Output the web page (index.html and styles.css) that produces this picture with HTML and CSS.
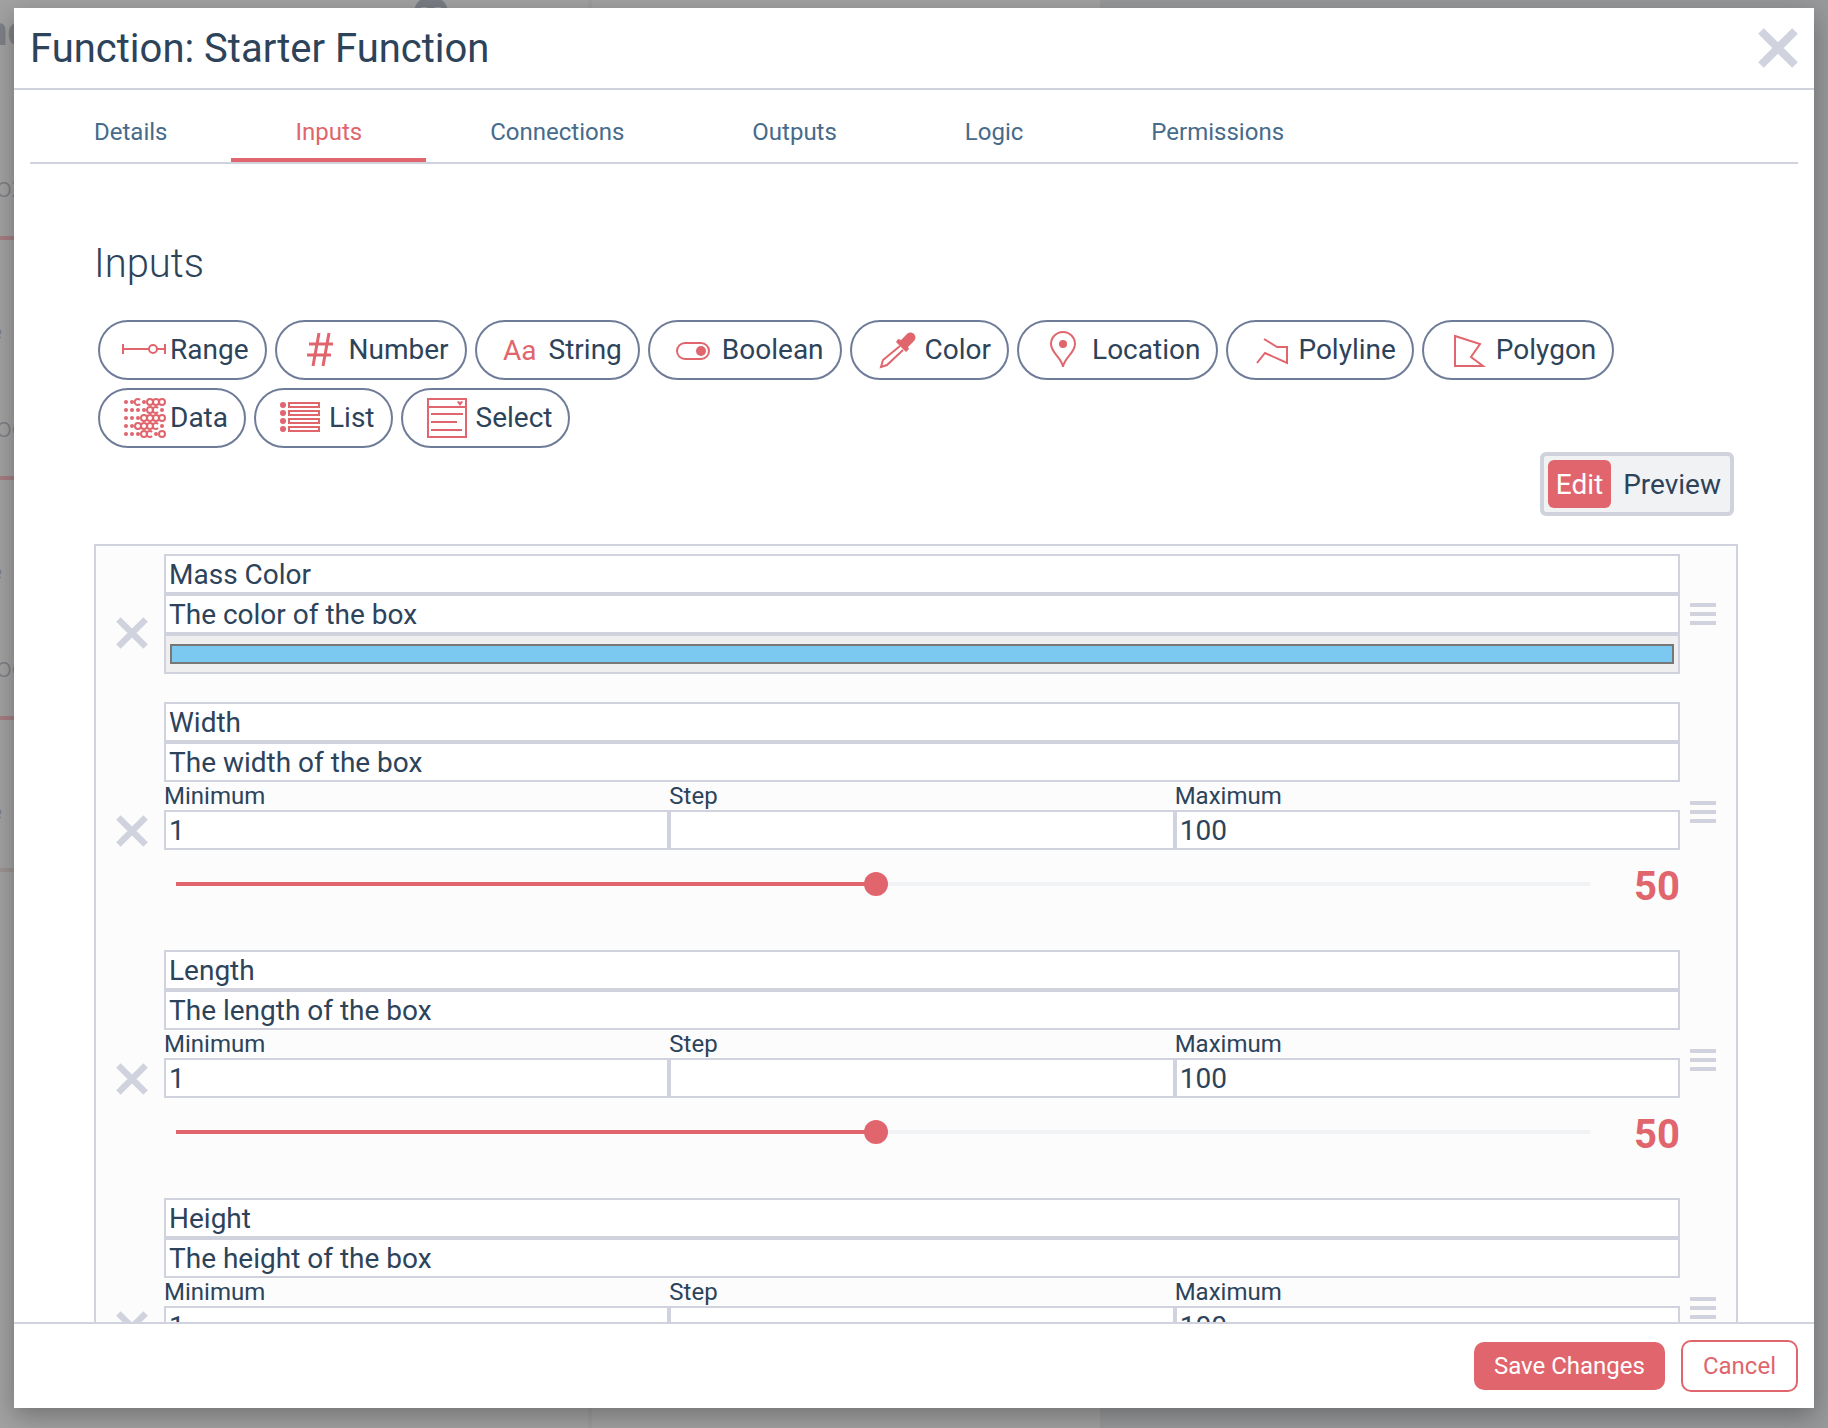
FILE: index.html
```html
<!DOCTYPE html>
<html lang="en">
<head>
<meta charset="utf-8">
<title>Function: Starter Function</title>
<link rel="stylesheet" href="styles.css">
</head>
<body>
<svg class="sprite" aria-hidden="true">
  <symbol id="cross" viewBox="0 0 40 40"><path d="M3 3L37 37M37 3L3 37" stroke="currentColor" stroke-width="8" fill="none"/></symbol>
  <symbol id="grip" viewBox="0 0 26 24"><path d="M0 3h26M0 12h26M0 21h26" stroke="currentColor" stroke-width="4"/></symbol>
</svg>

<div class="backdrop" aria-hidden="true">
  <div class="backdrop-side">
    <div class="backdrop-title">nd<span class="backdrop-badge">88</span></div>
    <div class="backdrop-item">ox</div>
    <div class="backdrop-item"><b>e</b>oo</div>
    <div class="backdrop-item"><b>e</b>oo</div>
    <div class="backdrop-item backdrop-item-last"><b>e</b></div>
  </div>
  <div class="backdrop-main"></div>
  <div class="backdrop-view"></div>
</div>

<div class="shade">
<section class="modal" role="dialog" aria-labelledby="modal-title">
  <header class="modal-header">
    <h1 id="modal-title">Function: Starter Function</h1>
    <button class="close" type="button" aria-label="Close"><svg><use href="#cross"/></svg></button>
  </header>

  <div class="modal-body">
    <nav class="tabs">
      <a href="#details">Details</a>
      <a href="#inputs" class="active">Inputs</a>
      <a href="#connections">Connections</a>
      <a href="#outputs">Outputs</a>
      <a href="#logic">Logic</a>
      <a href="#permissions">Permissions</a>
    </nav>

    <main class="content">
      <h2>Inputs</h2>

      <div class="types">
        <button type="button" class="narrow"><svg viewBox="0 0 54 48"><path d="M7 18v10M49 18v10M7 23h26M41 23h8"/><circle cx="37" cy="23" r="4"/></svg>Range</button>
        <button type="button"><svg viewBox="0 0 54 48"><path stroke-width="3" d="M26 7L20 40M36 7L30 40M16 18h24M14 29h24"/></svg>Number</button>
        <button type="button"><svg viewBox="0 0 54 48"><text x="10" y="34">Aa</text></svg>String</button>
        <button type="button"><svg viewBox="0 0 54 48"><rect x="11" y="17" width="32" height="16" rx="8"/><circle class="solid" cx="35" cy="25" r="5"/></svg>Boolean</button>
        <button type="button" class="wide"><svg viewBox="0 0 54 48"><path d="M32 20L15 34L13 41L19 39L35 24"/><path class="solid" d="M46 8c2 2 2 5 0 7l-6 6 1 2-3 3-10-10 2-3 3 1 6-6c2-2 5-2 7 0z"/></svg>Color</button>
        <button type="button" class="wide"><svg viewBox="0 0 54 48"><path d="M28 41C27 32 16 27 16 18a12 12 0 0 1 24 0C40 27 29 32 28 41z"/><circle class="solid" cx="28" cy="18" r="4"/></svg>Location</button>
        <button type="button" class="narrow"><svg viewBox="0 0 54 48"><path d="M20 13L33 21H43V37L21 27L13 37"/></svg>Polyline</button>
        <button type="button"><svg viewBox="0 0 54 48"><path d="M15 10L40 18L31 31L43 40H15z"/></svg>Polygon</button>
        <button type="button" class="narrow"><svg viewBox="0 0 54 48">
          <g class="solid"><circle cx="10" cy="8" r="2"/><circle cx="16" cy="8" r="2"/><circle cx="28" cy="8" r="2"/>
          <circle cx="10" cy="16" r="2"/><circle cx="16" cy="16" r="2"/><circle cx="22" cy="16" r="2"/><circle cx="28" cy="16" r="2"/><circle cx="46" cy="16" r="2"/>
          <circle cx="10" cy="24" r="2"/><circle cx="16" cy="24" r="2"/><circle cx="22" cy="24" r="2"/>
          <circle cx="10" cy="32" r="2"/><circle cx="16" cy="32" r="2"/><circle cx="46" cy="32" r="2"/>
          <circle cx="10" cy="40" r="2"/><circle cx="16" cy="40" r="2"/><circle cx="22" cy="40" r="2"/><circle cx="40" cy="40" r="2"/></g>
          <path d="M24 6a3 3 0 1 0 0 4M42 14a3 3 0 1 0 0 4M42 30a3 3 0 1 0 0 4M36 38a3 3 0 1 0 0 4"/>
          <circle cx="34" cy="8" r="3"/><circle cx="40" cy="8" r="3"/><circle cx="46" cy="8" r="3"/>
          <circle cx="34" cy="16" r="3"/>
          <circle cx="28" cy="24" r="3"/><circle cx="34" cy="24" r="3"/><circle cx="40" cy="24" r="3"/><circle cx="46" cy="24" r="3"/>
          <circle cx="22" cy="32" r="3"/><circle cx="28" cy="32" r="3"/><circle cx="34" cy="32" r="3"/>
          <circle cx="28" cy="40" r="3"/><circle cx="46" cy="40" r="3"/></svg>Data</button>
        <button type="button" class="wide"><svg viewBox="0 0 54 48"><g class="solid"><circle cx="11" cy="11" r="3"/><circle cx="11" cy="19" r="3"/><circle cx="11" cy="27" r="3"/><circle cx="11" cy="35" r="3"/></g><path d="M17 9h30v4H17zM17 17h30v4H17zM17 25h30v4H17zM17 33h30v4H17z"/></svg>List</button>
        <button type="button" class="wide"><svg viewBox="0 0 54 48"><path d="M9 5h38v38H9zM9 13h38M12 20h32M12 28h26M12 36h31"/><path class="solid" d="M38 8l1-1 2 1 2-1 1 1-3 4z"/></svg>Select</button>
      </div>

      <div class="mode">
        <button type="button" class="on">Edit</button>
        <button type="button">Preview</button>
      </div>

      <div class="panel">
        <article class="item">
          <button class="remove" type="button" aria-label="Remove Mass Color"><svg><use href="#cross"/></svg></button>
          <div class="fields">
            <input class="field" type="text" aria-label="Name" value="Mass Color">
            <input class="field" type="text" aria-label="Prompt" value="The color of the box">
            <input class="field swatch" type="color" aria-label="Color" value="#7bc8f0">
          </div>
          <button class="grip" type="button" aria-label="Move Mass Color"><svg><use href="#grip"/></svg></button>
        </article>

        <article class="item">
          <button class="remove" type="button" aria-label="Remove Width"><svg><use href="#cross"/></svg></button>
          <div class="fields">
            <input class="field" type="text" aria-label="Name" value="Width">
            <input class="field" type="text" aria-label="Prompt" value="The width of the box">
            <div class="limits">
              <label>Minimum<input class="field" type="text" value="1"></label>
              <label>Step<input class="field" type="text" value=""></label>
              <label>Maximum<input class="field" type="text" value="100"></label>
            </div>
            <div class="slider">
              <input type="range" id="width-value" aria-label="Width value" min="1" max="100" value="50" style="--fill: 0.495">
              <output for="width-value">50</output>
            </div>
          </div>
          <button class="grip" type="button" aria-label="Move Width"><svg><use href="#grip"/></svg></button>
        </article>

        <article class="item">
          <button class="remove" type="button" aria-label="Remove Length"><svg><use href="#cross"/></svg></button>
          <div class="fields">
            <input class="field" type="text" aria-label="Name" value="Length">
            <input class="field" type="text" aria-label="Prompt" value="The length of the box">
            <div class="limits">
              <label>Minimum<input class="field" type="text" value="1"></label>
              <label>Step<input class="field" type="text" value=""></label>
              <label>Maximum<input class="field" type="text" value="100"></label>
            </div>
            <div class="slider">
              <input type="range" id="length-value" aria-label="Length value" min="1" max="100" value="50" style="--fill: 0.495">
              <output for="length-value">50</output>
            </div>
          </div>
          <button class="grip" type="button" aria-label="Move Length"><svg><use href="#grip"/></svg></button>
        </article>

        <article class="item">
          <button class="remove" type="button" aria-label="Remove Height"><svg><use href="#cross"/></svg></button>
          <div class="fields">
            <input class="field" type="text" aria-label="Name" value="Height">
            <input class="field" type="text" aria-label="Prompt" value="The height of the box">
            <div class="limits">
              <label>Minimum<input class="field" type="text" value="1"></label>
              <label>Step<input class="field" type="text" value=""></label>
              <label>Maximum<input class="field" type="text" value="100"></label>
            </div>
            <div class="slider">
              <input type="range" id="height-value" aria-label="Height value" min="1" max="100" value="50" style="--fill: 0.495">
              <output for="height-value">50</output>
            </div>
          </div>
          <button class="grip" type="button" aria-label="Move Height"><svg><use href="#grip"/></svg></button>
        </article>
      </div>
    </main>
  </div>

  <footer class="modal-footer">
    <button class="save" type="button">Save Changes</button>
    <button class="cancel" type="button">Cancel</button>
  </footer>
</section>
</div>
</body>
</html>
```
FILE: styles.css
```css
:root {
  --ink: #2d435a;
  --line: #d0d3de;
  --red: #e0656d;
}

* { box-sizing: border-box; }

body {
  margin: 0;
  height: 100vh;
  overflow: hidden;
  font-family: Roboto, "Liberation Sans", sans-serif;
  font-size: 28px;
  color: var(--ink);
}

h1, h2 { margin: 0; }

button {
  margin: 0;
  padding: 0;
  border: 0;
  background: none;
  font: inherit;
  color: inherit;
  cursor: pointer;
}

.sprite { display: none; }

/* Page behind the dialog */
.backdrop {
  position: fixed;
  inset: 0;
  display: grid;
  grid-template-columns: 588px 512px 1fr;
  background: #a2a2a2;
}
.backdrop-side { overflow: hidden; color: #7d8085; font-weight: 300; }
.backdrop-main { border-left: 4px solid #9d9d9d; }
.backdrop-view { background: #98999b; }
.backdrop-title {
  position: relative;
  height: 156px;
  padding-top: 8px;
  font-size: 40px;
  font-weight: 700;
  line-height: 48px;
  text-indent: -15px;
}
.backdrop-badge {
  position: absolute;
  left: 414px;
  top: -4px;
  width: 34px;
  height: 34px;
  border-radius: 50%;
  background: #7a7d84;
  color: #a2a2a2;
  font-size: 24px;
  line-height: 40px;
  text-align: center;
  text-indent: 0;
}
.backdrop-item {
  display: flex;
  flex-direction: column;
  justify-content: flex-end;
  height: 240px;
  padding-bottom: 32px;
  border-bottom: 4px solid #a67f82;
  line-height: 32px;
  text-indent: -4px;
}
.backdrop-item:nth-child(2) { height: 84px; }
.backdrop-item b { margin-bottom: 64px; font-size: 24px; font-weight: 500; text-indent: -11px; }
.backdrop-item-last { height: 152px; border-color: #9b9493; padding-bottom: 0; }
.backdrop-item-last b { margin-bottom: 40px; }

/* Dialog frame */
.shade {
  position: fixed;
  inset: 0;
  padding: 8px 14px 20px;
  display: flex;
}
.modal {
  flex: 1;
  min-width: 0;
  display: flex;
  flex-direction: column;
  background: #fff;
  box-shadow: 0 8px 24px rgba(0, 0, 0, 0.3);
}
.modal-header {
  flex: none;
  display: flex;
  align-items: center;
  justify-content: space-between;
  height: 82px;
  padding: 0 16px;
  border-bottom: 2px solid var(--line);
}
.modal-header h1 { padding-top: 2px; font-size: 40px; font-weight: 400; line-height: 48px; }
.close { display: flex; color: var(--line); }
.close svg { width: 40px; height: 40px; }
.modal-body { flex: 1; min-height: 0; overflow: hidden; padding: 0 16px; }

.tabs { display: flex; border-bottom: 2px solid var(--line); font-size: 24px; }
.tabs a {
  padding: 26px 64px 10px;
  border-bottom: 4px solid transparent;
  line-height: 32px;
  color: #466b8b;
  text-decoration: none;
}
.tabs .active { color: var(--red); border-color: var(--red); }

.content { padding: 74px 60px 0 64px; }
.content h2 { margin-bottom: 26px; font-size: 40px; font-weight: 300; line-height: 52px; }

/* Input types */
.types { display: flex; flex-wrap: wrap; gap: 8px; padding: 4px; }
.types button {
  display: flex;
  align-items: center;
  height: 60px;
  padding: 0 16px;
  border: 2px solid #6f7c98;
  border-radius: 30px;
  line-height: 32px;
}
.types svg {
  width: 54px;
  height: 48px;
  margin-right: 2px;
  fill: none;
  stroke: var(--red);
  stroke-width: 2;
}
.types .narrow svg { margin-right: 0; }
.types .wide svg { margin-right: 3px; }
.types .solid, .types text { fill: var(--red); stroke: none; }

.mode {
  display: flex;
  gap: 4px;
  width: fit-content;
  margin: 0 4px 28px auto;
  padding: 4px 1px 4px 4px;
  border: 4px solid var(--line);
  border-radius: 6px;
  background: #f0f2f4;
}
.mode button { height: 48px; padding: 0 8px; border-radius: 6px; }
.mode .on { background: var(--red); color: #fff; }

/* Input list */
.panel {
  display: flex;
  flex-direction: column;
  gap: 28px;
  padding: 8px 20px;
  border: 2px solid var(--line);
  background: #fcfcfc;
}
.item { display: flex; align-items: center; }
.remove { display: flex; padding-top: 38px; margin-right: 16px; color: var(--line); }
.remove svg { width: 32px; height: 32px; }
.grip { display: flex; margin-left: 10px; color: var(--line); }
.grip svg { width: 26px; height: 24px; }
.fields { flex: 1; min-width: 0; }
.field {
  display: block;
  width: 100%;
  height: 40px;
  margin: 0;
  padding: 0 3px;
  border: 2px solid var(--line);
  border-radius: 0;
  background: #fff;
  font: inherit;
  font-size: 28px;
  color: inherit;
}
.swatch { padding: 8px 4px; background: #efefef; }
.swatch::-webkit-color-swatch-wrapper { padding: 0; }
.swatch::-webkit-color-swatch { border: 2px solid #777; border-radius: 0; }
.limits { display: grid; grid-template-columns: repeat(3, 1fr); }
.limits label { font-size: 24px; line-height: 28px; }

.slider { display: flex; align-items: center; justify-content: space-between; height: 72px; gap: 32px; }
.slider input {
  flex: 1;
  min-width: 0;
  height: 24px;
  margin: 0 0 4px;
  appearance: none;
  background:
    linear-gradient(var(--red), var(--red)) 12px 50% / calc((100% - 24px) * var(--fill)) 4px no-repeat,
    linear-gradient(#f0f2f4, #f0f2f4) 50% 50% / calc(100% - 24px) 4px no-repeat;
}
.slider input::-webkit-slider-thumb {
  appearance: none;
  width: 24px;
  height: 24px;
  border-radius: 50%;
  background: var(--red);
}
.slider output { padding-top: 2px; font-size: 40px; font-weight: 700; line-height: 48px; color: var(--red); }

.modal-footer {
  flex: none;
  display: flex;
  align-items: center;
  justify-content: flex-end;
  gap: 16px;
  height: 86px;
  padding: 0 16px;
  border-top: 2px solid var(--line);
  font-size: 24px;
}
.save { height: 48px; padding: 0 20px; border-radius: 10px; background: var(--red); color: #fff; }
.cancel { height: 52px; padding: 0 20px; border: 2px solid var(--red); border-radius: 10px; color: var(--red); }
```
